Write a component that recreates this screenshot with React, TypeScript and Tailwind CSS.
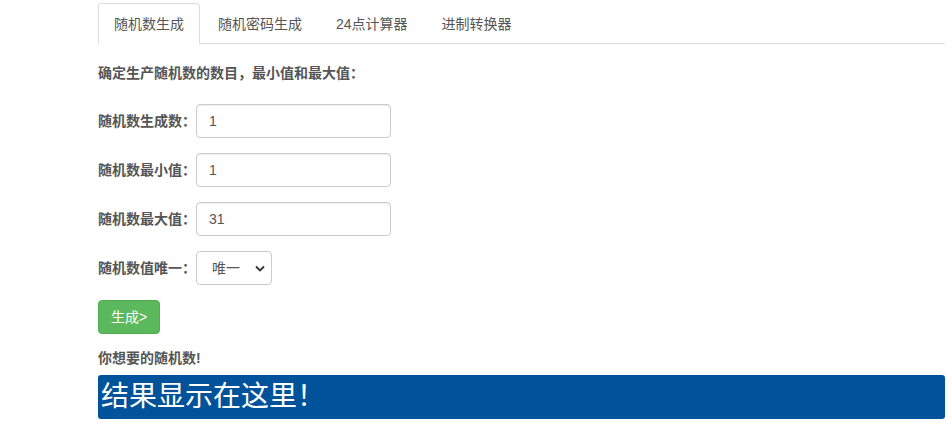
import { useState } from "react";

const tabs = ["随机数生成", "随机密码生成", "24点计算器", "进制转换器"];

const fields = [
  { label: "随机数生成数：", value: "1" },
  { label: "随机数最小值：", value: "1" },
  { label: "随机数最大值：", value: "31" },
];

export default function App() {
  const [active, setActive] = useState(0);
  const [values, setValues] = useState(fields.map((f) => f.value));
  const [unique, setUnique] = useState("1");

  return (
    <div
      className="min-h-[432px] bg-white pl-[98px] pr-[7px] pt-[3px] text-[14px] text-[#555]"
      style={{ fontFamily: '"Liberation Sans", "Noto Sans CJK SC", sans-serif' }}
    >
      {/* Tabs */}
      <ul className="flex border-b border-[#ddd]">
        {tabs.map((t, i) => (
          <li key={t} className="-mb-px mr-[2px]">
            <button
              onClick={() => setActive(i)}
              className={`block rounded-t-[4px] border px-[15px] pt-[10px] pb-[9px] leading-[20px] ${
                active === i
                  ? "border-[#ddd] border-b-white bg-white text-[#555]"
                  : "border-transparent text-[#555]"
              }`}
            >
              {t}
            </button>
          </li>
        ))}
      </ul>

      <p className="mt-[19px] font-bold leading-[20px]">确定生产随机数的数目，最小值和最大值：</p>

      <div className="mt-[21px] flex flex-col gap-[15px]">
        {fields.map((f, i) => (
          <div key={f.label} className="flex items-center">
            <label className="w-[98px] font-bold">{f.label}</label>
            <input
              type="text"
              value={values[i]}
              onChange={(e) => setValues(values.map((v, j) => (j === i ? e.target.value : v)))}
              className="h-[34px] w-[195px] rounded-[4px] border border-[#ccc] px-[12px] text-[14px] text-[#555] shadow-[inset_0_1px_1px_rgba(0,0,0,0.075)] focus:outline-none"
            />
          </div>
        ))}
        <div className="flex items-center">
          <label className="w-[98px] font-bold">随机数值唯一：</label>
          <div className="relative">
            <select
              value={unique}
              onChange={(e) => setUnique(e.target.value)}
              className="h-[34px] w-[76px] appearance-none rounded-[4px] border border-[#ccc] bg-white pl-[15px] text-[14px] text-[#555] focus:outline-none"
            >
              <option value="1">唯一</option>
              <option value="0">不唯一</option>
            </select>
            <svg
              className="pointer-events-none absolute right-[7px] top-[14px]"
              width="10"
              height="7"
              viewBox="0 0 10 7"
            >
              <path d="M1 1.5 L5 5.5 L9 1.5" fill="none" stroke="#333" strokeWidth="1.8" />
            </svg>
          </div>
        </div>
      </div>

      <button className="mt-[15px] h-[34px] rounded-[4px] border border-[#4cae4c] bg-[#5cb85c] px-[12px] text-[14px] text-white">
        生成&gt;
      </button>

      <p className="mt-[14px] font-bold leading-[20px]">你想要的随机数!</p>

      <div className="mt-[7px] flex h-[44px] items-center rounded-[3px] bg-[#00529b] pl-[3px] text-[28px] text-white">
        结果显示在这里！
      </div>
    </div>
  );
}
